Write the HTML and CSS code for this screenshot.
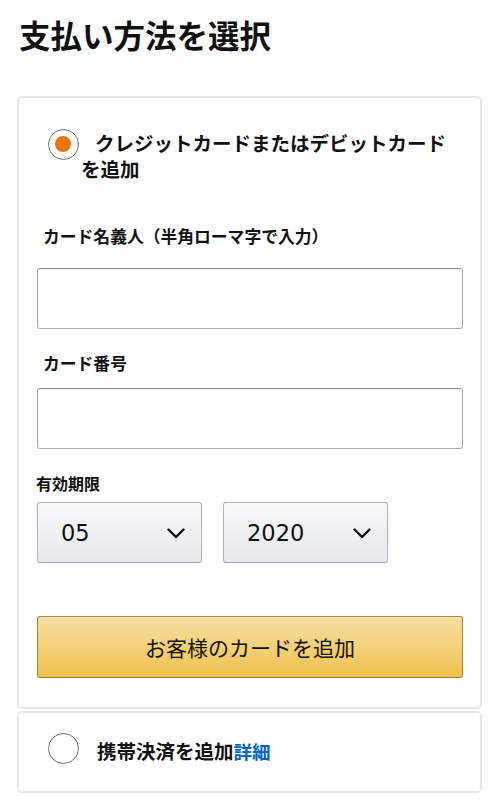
FILE: index.html
```html
<!DOCTYPE html>
<html lang="ja">
<head>
<meta charset="utf-8">
<title>支払い方法を選択</title>
<link rel="stylesheet" href="styles.css">
</head>
<body>
<h1 class="title">支払い方法を選択</h1>
<div class="card card-main">
  <div class="option-label"><span class="radio radio-checked"><span class="radio-dot"></span></span>クレジットカードまたはデビットカードを追加</div>
  <div class="field-label field-label-name">カード名義人（半角ローマ字で入力）</div>
  <div class="text-input input-name"></div>
  <div class="field-label field-label-number">カード番号</div>
  <div class="text-input input-number"></div>
  <div class="expiry-label">有効期限</div>
  <div class="expiry-row">
    <div class="select-box"><span class="select-value">05</span><svg class="chevron" width="18" height="11" viewBox="0 0 18 11"><path d="M1.5 1.5 L9 9 L16.5 1.5" fill="none" stroke="#111" stroke-width="2.4" stroke-linecap="round" stroke-linejoin="round"/></svg></div>
    <div class="select-box"><span class="select-value">2020</span><svg class="chevron" width="18" height="11" viewBox="0 0 18 11"><path d="M1.5 1.5 L9 9 L16.5 1.5" fill="none" stroke="#111" stroke-width="2.4" stroke-linecap="round" stroke-linejoin="round"/></svg></div>
  </div>
  <div class="add-button">お客様のカードを追加</div>
</div>
<div class="card card-mobile">
  <span class="radio"></span>
  <span class="mobile-text">携帯決済を追加<a class="detail-link" href="#">詳細</a></span>
</div>
</body>
</html>
```
FILE: styles.css
```css
html, body {
  margin: 0;
  padding: 0;
  background: #fff;
}
body {
  font-family: "Noto Sans CJK JP", "Noto Sans", sans-serif;
  color: #111;
  width: 500px;
}
.title {
  margin: 0;
  padding: 15px 0 0 19px;
  font-size: 31.5px;
  line-height: 38px;
  font-weight: 700;
  color: #111;
}
.card {
  margin-left: 17px;
  width: 465px;
  box-sizing: border-box;
  border: 2px solid #e6e6e6;
  border-radius: 5px;
  background: #fff;
}
.card-main {
  margin-top: 43px;
  padding: 32px 17px 29px 18px;
}
.option-label {
  padding-left: 44px;
  font-size: 19.5px;
  line-height: 26px;
  font-weight: 700;
  color: #111;
}
.radio {
  display: inline-block;
  box-sizing: border-box;
  width: 31px;
  height: 31px;
  border: 1.5px solid #707070;
  border-radius: 50%;
  background: #fff;
  position: relative;
}
.option-label .radio {
  vertical-align: middle;
  margin: -5px 16px -5px -33px;
  top: -1px;
}
.radio-dot {
  position: absolute;
  left: 6px;
  top: 6px;
  width: 16px;
  height: 16px;
  border-radius: 50%;
  background: #e77600;
}
.field-label {
  padding-left: 6px;
  font-size: 16.8px;
  line-height: 24px;
  font-weight: 700;
  color: #111;
}
.field-label-name { margin-top: 42px; }
.field-label-number { margin-top: 22px; }
.text-input {
  box-sizing: border-box;
  height: 61px;
  border: 1px solid #a6a6a6;
  border-top-color: #949494;
  border-radius: 3px;
  box-shadow: inset 0 1px 0 rgba(0,0,0,0.07);
  background: #fff;
}
.input-name { margin-top: 20px; }
.input-number { margin-top: 13px; }
.expiry-label {
  margin-top: 22px;
  margin-left: -1px;
  font-size: 16px;
  line-height: 24px;
  font-weight: 700;
  color: #111;
}
.expiry-row {
  margin-top: 7px;
  display: flex;
  gap: 21px;
}
.select-box {
  box-sizing: border-box;
  width: 165px;
  height: 61px;
  border: 1px solid #adb1b8;
  border-bottom-color: #a2a6ac;
  border-radius: 3px;
  background: linear-gradient(to bottom, #f7f8fa, #e7e9ec);
  box-shadow: inset 0 1px 0 rgba(255,255,255,0.6);
  display: flex;
  align-items: center;
  justify-content: space-between;
  padding: 0 16px 0 23px;
}
.select-value {
  font-family: "DejaVu Sans", sans-serif;
  font-size: 22.5px;
  color: #111;
}
.chevron { display: block; margin-top: 1px; }
.add-button {
  margin-top: 53px;
  box-sizing: border-box;
  height: 62px;
  border: 1px solid #a88734;
  border-bottom-color: #9c7e31;
  border-radius: 3px;
  background: linear-gradient(to bottom, #f7dfa5, #f0c14b);
  box-shadow: inset 0 1px 0 rgba(255,255,255,0.4);
  display: flex;
  align-items: center;
  justify-content: center;
  font-size: 21px;
  font-weight: 400;
  color: #111;
}
.card-mobile {
  margin-top: 2px;
  padding: 20px 17px 27px 29px;
  display: flex;
  align-items: center;
  gap: 18px;
}
.card-mobile .radio { flex: none; }
.mobile-text {
  font-size: 19.5px;
  line-height: 26px;
  font-weight: 700;
  color: #111;
  position: relative;
  top: 2px;
}
.detail-link {
  color: #0066c0;
  text-decoration: none;
  font-size: 18.5px;
}
```
